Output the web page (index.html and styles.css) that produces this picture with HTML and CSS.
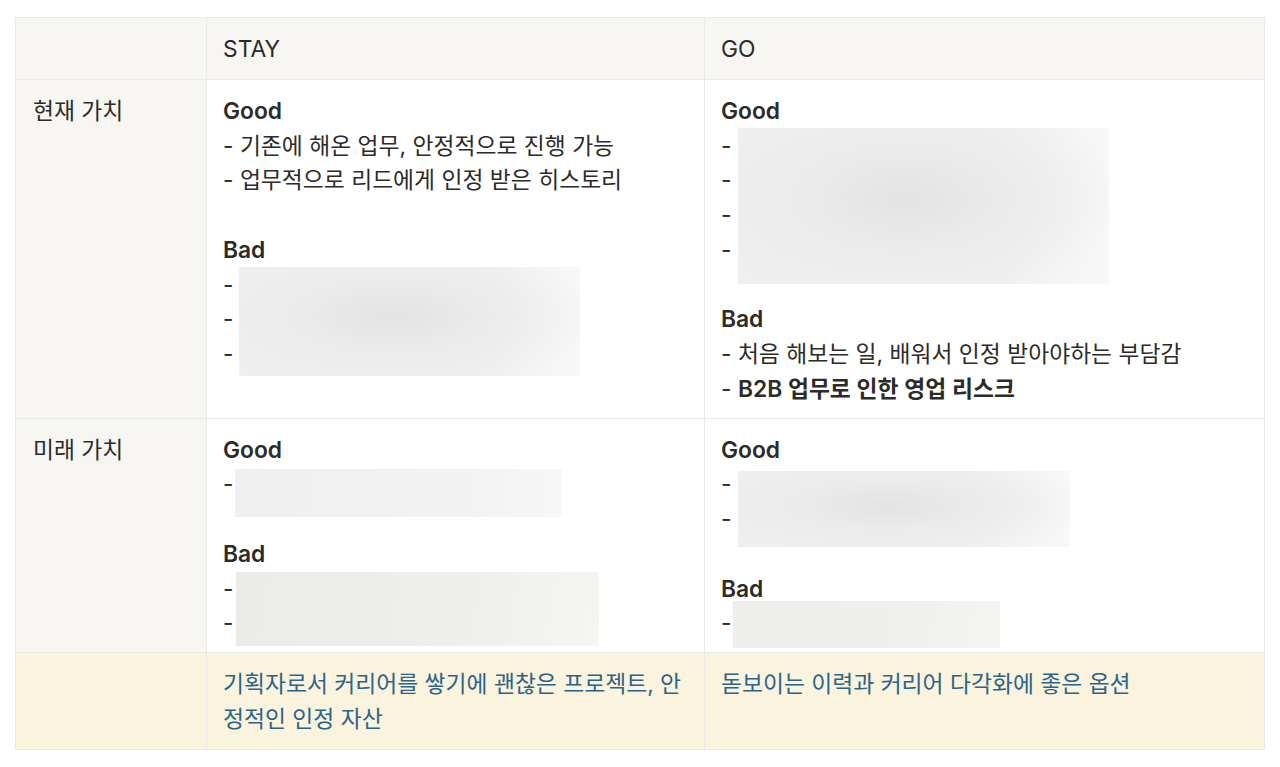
FILE: index.html
```html
<!DOCTYPE html>
<html lang="ko">
<head>
<meta charset="utf-8">
<title>STAY vs GO</title>
<link rel="stylesheet" href="styles.css">
</head>
<body>
<table class="grid">
  <colgroup>
    <col class="c1"><col class="c2"><col class="c3">
  </colgroup>
  <tr class="head">
    <td class="side"></td>
    <td>STAY</td>
    <td>GO</td>
  </tr>
  <tr>
    <td class="side">현재 가치</td>
    <td>
      <div class="lbl">Good</div>
      <div class="ln">- 기존에 해온 업무, 안정적으로 진행 가능</div>
      <div class="ln">- 업무적으로 리드에게 인정 받은 히스토리</div>
      <div class="ln blank"></div>
      <div class="lbl">Bad</div>
      <div class="redact">
        <div class="ln">-</div>
        <div class="ln">-</div>
        <div class="ln">-</div>
        <span class="blur b1"></span>
      </div>
    </td>
    <td>
      <div class="lbl">Good</div>
      <div class="redact">
        <div class="ln">-</div>
        <div class="ln">-</div>
        <div class="ln">-</div>
        <div class="ln">-</div>
        <span class="blur b2"></span>
      </div>
      <div class="ln blank"></div>
      <div class="lbl">Bad</div>
      <div class="ln">- 처음 해보는 일, 배워서 인정 받아야하는 부담감</div>
      <div class="ln">- <b>B2B 업무로 인한 영업 리스크</b></div>
    </td>
  </tr>
  <tr>
    <td class="side">미래 가치</td>
    <td>
      <div class="lbl">Good</div>
      <div class="redact">
        <div class="ln">-</div>
        <span class="blur b3"></span>
      </div>
      <div class="ln blank"></div>
      <div class="lbl">Bad</div>
      <div class="redact">
        <div class="ln">-</div>
        <div class="ln">-</div>
        <span class="blur b4"></span>
      </div>
    </td>
    <td>
      <div class="lbl">Good</div>
      <div class="redact">
        <div class="ln">-</div>
        <div class="ln">-</div>
        <span class="blur b5"></span>
      </div>
      <div class="ln blank"></div>
      <div class="lbl">Bad</div>
      <div class="redact">
        <div class="ln">-</div>
        <span class="blur b6"></span>
      </div>
    </td>
  </tr>
  <tr class="summary">
    <td class="side"></td>
    <td>기획자로서 커리어를 쌓기에 괜찮은 프로젝트, 안정적인 인정 자산</td>
    <td>돋보이는 이력과 커리어 다각화에 좋은 옵션</td>
  </tr>
</table>
</body>
</html>
```

FILE: styles.css
```css
html, body {
  margin: 0;
  background: #ffffff;
}
body {
  padding: 17px 15px;
  font-family: Inter, "Noto Sans CJK KR", sans-serif;
  font-size: 22.8px;
  line-height: 34.75px;
  color: #2c2b28;
}
.grid {
  border-collapse: collapse;
  table-layout: fixed;
  width: 1249px;
}
.c1 { width: 191px; }
.c2 { width: 498px; }
.c3 { width: 560px; }
.grid td {
  border: 1px solid #e9e9e7;
  padding: 14px 8px 11px 16px;
  vertical-align: top;
  word-break: break-all;
}
.grid td.side {
  background: #f7f6f3;
  padding-left: 17px;
}
.head td {
  background: #f7f6f3;
  font-weight: 400;
  padding-bottom: 12px;
}
.lbl {
  font-weight: 600;
}
.ln b {
  font-weight: 600;
}
.blank {
  height: 34.75px;
}
.redact {
  position: relative;
}
.blur {
  position: absolute;
  display: block;
  background:
    radial-gradient(ellipse 60% 70% at 45% 45%, #e3e3e3 0%, #ebebeb 45%, rgba(246,246,246,0) 100%),
    linear-gradient(90deg, #efefef 0%, #f0f0f0 70%, #f8f8f8 100%);
}
.b1 { left: 16px; top: -1px; width: 341px; height: 109px; }
.b2 { left: 17px; top: -1px; width: 371px; height: 156px; }
.b3 { left: 12px; top: 2px; width: 327px; height: 48px;
  background: linear-gradient(90deg, #f0f0f0, #f2f2f2 70%, #f7f7f7); }
.b4 { left: 13px; top: 0; width: 363px; height: 74px;
  background: linear-gradient(100deg, #ebebe8, #eeeeeb 60%, #f5f5f2); }
.b5 { left: 17px; top: 4px; width: 332px; height: 76px; }
.b6 { left: 12px; top: -5px; width: 267px; height: 47px;
  background: linear-gradient(100deg, #eeeeeb, #efefec 60%, #f4f4f1); }
.summary td {
  background: #faf3dd;
  color: #2b6488;
  padding-bottom: 12px;
}
.summary td.side {
  background: #faf3dd;
}
```
